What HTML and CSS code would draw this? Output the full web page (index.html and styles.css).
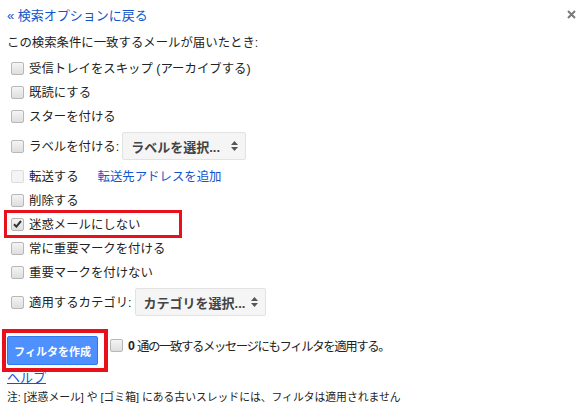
FILE: index.html
```html
<!DOCTYPE html>
<html lang="ja">
<head>
    <meta charset="UTF-8">
    <title>フィルタを作成</title>
    <link rel="stylesheet" href="styles.css">
</head>
<body>
    <div class="dialog">
        <span class="close">
            <svg width="9" height="9" viewBox="0 0 9 9"><path d="M1 1L8 8M8 1L1 8" stroke="#7a7a7a" stroke-width="2"/></svg>
        </span>

        <a class="back" href="#">« 検索オプションに戻る</a>
        <div class="heading">この検索条件に一致するメールが届いたとき:</div>

        <div class="row"><span class="cb"></span>受信トレイをスキップ (アーカイブする)</div>
        <div class="row"><span class="cb"></span>既読にする</div>
        <div class="row"><span class="cb"></span>スターを付ける</div>
        <div class="row tall">
            <span class="cb"></span>ラベルを付ける:
            <span class="select label-select">ラベルを選択...
                <svg class="arrows" width="7" height="10" viewBox="0 0 7 10"><path d="M0 4L3.5 0L7 4ZM0 6L3.5 10L7 6Z" fill="#555"/></svg>
            </span>
        </div>
        <div class="row"><span class="cb disabled"></span>転送する<a class="fwd" href="#">転送先アドレスを追加</a></div>
        <div class="row"><span class="cb"></span>削除する</div>
        <div class="row highlight"><span class="cb checked">
            <svg width="9" height="8" viewBox="0 0 9 8"><path d="M1 4.2L3.4 6.6L8 1" fill="none" stroke="#333" stroke-width="2"/></svg>
        </span>迷惑メールにしない</div>
        <div class="row"><span class="cb"></span>常に重要マークを付ける</div>
        <div class="row"><span class="cb"></span>重要マークを付けない</div>
        <div class="row tall">
            <span class="cb"></span>適用するカテゴリ:
            <span class="select cat-select">カテゴリを選択...
                <svg class="arrows" width="7" height="10" viewBox="0 0 7 10"><path d="M0 4L3.5 0L7 4ZM0 6L3.5 10L7 6Z" fill="#555"/></svg>
            </span>
        </div>

        <div class="actions">
            <div class="btn-frame"><button class="create">フィルタを作成</button></div>
            <span class="apply"><span class="cb"></span><b class="count">0</b>&nbsp;通の一致するメッセージにもフィルタを適用する。</span>
        </div>

        <a class="help" href="#">ヘルプ</a>
        <div class="note">注: [迷惑メール] や [ゴミ箱] にある古いスレッドには、フィルタは適用されません</div>
    </div>
</body>
</html>
```

FILE: styles.css
```css
body {
    margin: 0;
    background: #fff;
    font-family: Arial, "Liberation Sans", "Noto Sans CJK JP", sans-serif;
    font-size: 12.4px;
    color: #222;
}
.dialog {
    position: relative;
    width: 584px;
    height: 413px;
    padding: 8px 0 0 7px;
    box-sizing: border-box;
}
.close {
    position: absolute;
    top: 10px;
    right: 8px;
    line-height: 0;
}
a {
    color: #15c;
    text-decoration: none;
}
.back {
    display: block;
    height: 16px;
    line-height: 16px;
    font-size: 13px;
}
.heading {
    height: 24px;
    line-height: 24px;
    margin-top: 7px;
    margin-bottom: 1px;
}
.row {
    display: flex;
    align-items: center;
    height: 24px;
    padding-left: 4px;
    white-space: nowrap;
}
.row.tall {
    height: 36px;
}
.cb {
    display: inline-flex;
    align-items: center;
    justify-content: center;
    width: 13px;
    height: 13px;
    box-sizing: border-box;
    border: 1px solid #b8b8b8;
    border-radius: 2px;
    background: linear-gradient(#f4f4f4, #dedede);
    margin-right: 5px;
    flex-shrink: 0;
}
.cb.disabled {
    border-color: #dcdcdc;
    background: #f4f4f4;
}
.highlight {
    margin: -2px 0 -2px -3px;
    height: 28px;
    width: 178px;
    box-sizing: border-box;
    border: 3px solid #e8101a;
    padding-left: 4px;
}
.select {
    display: inline-flex;
    align-items: center;
    height: 28px;
    box-sizing: border-box;
    margin-left: 3px;
    padding: 0 7px 0 8px;
    background: #f5f5f5;
    border: 1px solid #e2e2e2;
    border-radius: 2px;
    font-size: 13px;
    font-weight: bold;
    color: #444;
}
.label-select {
    width: 124px;
}
.cat-select {
    width: 131px;
}
.arrows {
    margin-left: auto;
    flex-shrink: 0;
}
.fwd {
    margin-left: 19px;
}
.actions {
    display: flex;
    align-items: flex-start;
    margin-top: 9px;
    margin-left: -5px;
    height: 43px;
    white-space: nowrap;
}
.btn-frame {
    width: 106px;
    height: 43px;
    box-sizing: border-box;
    border: 4px solid #e8101a;
    padding: 3px 0 0 1px;
    margin-right: 2px;
}
.create {
    width: 91px;
    height: 29px;
    border: 1px solid #3079ed;
    border-radius: 2px;
    background: #4d90fe;
    color: #fff;
    font-family: inherit;
    font-size: 11px;
    font-weight: bold;
    padding: 0;
}
.apply {
    display: flex;
    align-items: center;
    height: 13px;
    margin-top: 10px;
    letter-spacing: -1.4px;
}
.apply .cb {
    margin-right: 5px;
}
.count {
    font-weight: bold;
    letter-spacing: 0;
}
.help {
    display: block;
    width: 40px;
    margin-top: -1px;
    line-height: 14px;
    font-size: 13px;
    text-decoration: underline;
}
.note {
    margin-top: 4px;
    font-size: 10.8px;
    line-height: 16px;
}
```
